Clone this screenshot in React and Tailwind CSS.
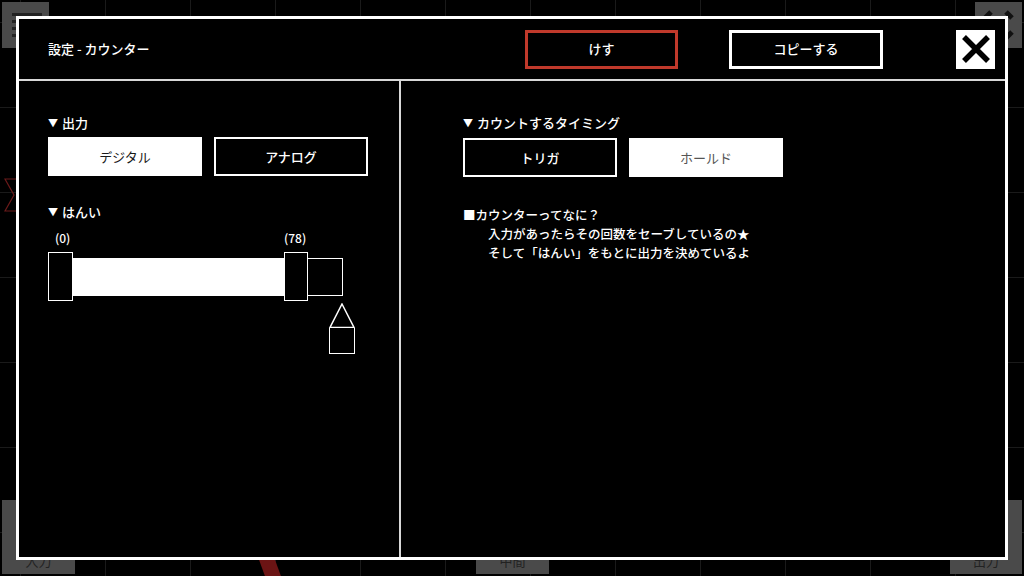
import React from 'react';

const font = { fontFamily: '"Noto Sans CJK JP", "Noto Sans", sans-serif' };

// gray tool buttons sitting on the canvas behind the dialog
const CanvasButton = ({ className, label }) => (
    <div className={`absolute bg-[#4a4a4a] flex items-end justify-center pb-1 text-[13px] text-[#222] ${className}`}>
        {label}
    </div>
);

const Toggle = ({ label, active, dim }) => (
    <button
        className={`w-[154px] h-[39px] flex items-center justify-center text-[13px] ${active
            ? `bg-white ${dim ? 'text-[#555]' : 'text-[#1a1a1a]'}`
            : 'bg-black text-white font-medium border-2 border-white'
            }`}
    >
        {label}
    </button>
);

const Section = ({ title }) => (
    <div className="text-[13px] leading-[16px] font-medium text-white flex items-center gap-1">
        <span className="text-[10px]">▼</span>
        <span>{title}</span>
    </div>
);

const RangeSlider = () => (
    <div className="mt-[10px]">
        <div className="flex text-[12px] leading-[16px] text-white font-medium">
            <span className="w-[236px] pl-[7px]">(0)</span>
            <span>(78)</span>
        </div>
        <div className="flex items-center mt-[6px]">
            <div className="w-[25px] h-[49px] border-[1.5px] border-white bg-black" />
            <div className="w-[211px] h-[38px] bg-white" />
            <div className="w-[24px] h-[49px] border-[1.5px] border-white bg-black" />
            <div className="w-[35px] h-[38px] border-[1.5px] border-white border-l-0 bg-black" />
        </div>
        <div className="ml-[281px] mt-[2px] flex flex-col">
            <svg width="26" height="25" viewBox="0 0 26 25">
                <polygon points="13,1 25,24.5 1,24.5" fill="black" stroke="white" strokeWidth="1.5" />
            </svg>
            <div className="w-[26px] h-[26px] border-[1.5px] border-white border-t-0" />
        </div>
    </div>
);

export default function App() {
    return (
        <div className="relative w-[1024px] h-[576px] overflow-hidden bg-black" style={font}>
            {/* canvas behind */}
            <div className="absolute inset-0 bg-[linear-gradient(to_right,#1a1a1a_1px,transparent_1px),linear-gradient(to_bottom,#1a1a1a_1px,transparent_1px)] bg-[size:85px_85px] bg-[position:20px_22px]" />
            <div className="absolute left-[2px] top-[2px] w-[47px] h-[46px] bg-[#4a4a4a] flex flex-col justify-center gap-[4px] pl-[10px]">
                <div className="w-[30px] h-[3px] bg-[#222]" />
                <div className="w-[30px] h-[3px] bg-[#222]" />
                <div className="w-[30px] h-[3px] bg-[#222]" />
                <div className="w-[30px] h-[3px] bg-[#222]" />
            </div>
            <div className="absolute left-[975px] top-[2px] w-[47px] h-[46px] bg-[#4a4a4a]">
                <svg width="47" height="46" viewBox="0 0 47 46">
                    <path d="M10 16 L16 10 M31 10 L37 16 M10 30 L16 36 M31 36 L37 30" stroke="#111" strokeWidth="5" />
                </svg>
            </div>
            <CanvasButton className="left-[2px] top-[500px] w-[73px] h-[74px]" label="入力" />
            <CanvasButton className="left-[476px] top-[500px] w-[73px] h-[74px]" label="中間" />
            <CanvasButton className="left-[950px] top-[500px] w-[72px] h-[74px]" label="出力" />
            <svg className="absolute left-[4px] top-[178px]" width="14" height="34" viewBox="0 0 14 34">
                <path d="M13 1 H1 L10 17 L1 33 H13" fill="none" stroke="#6b1a1a" strokeWidth="1.2" />
            </svg>
            <div className="absolute left-[262px] top-[556px] w-[16px] h-[24px] bg-[#6b1414] skew-x-[20deg]" />

            {/* dialog */}
            <div className="absolute left-[16px] top-[16px] w-[992px] h-[544px] border-[3px] border-white bg-black flex flex-col">
                <div className="h-[62px] shrink-0 border-b-2 border-[#d8d8d8] flex items-center pl-[29px] pr-[10px]">
                    <span className="flex-1 text-[13px] font-medium text-white">設定 - カウンター</span>
                    <button className="w-[153px] h-[39px] border-[3px] border-[#c0392b] text-white text-[13px] font-medium flex items-center justify-center">
                        けす
                    </button>
                    <button className="ml-[51px] w-[154px] h-[39px] border-[3px] border-white text-white text-[13px] font-medium flex items-center justify-center">
                        コピーする
                    </button>
                    <button className="ml-[73px] w-[39px] h-[39px] bg-white flex items-center justify-center">
                        <svg width="30" height="30" viewBox="0 0 30 30">
                            <path d="M3 3 L27 27 M27 3 L3 27" stroke="black" strokeWidth="5.5" />
                        </svg>
                    </button>
                </div>
                <div className="flex-1 flex">
                    <div className="w-[382px] shrink-0 border-r-2 border-[#d8d8d8] pl-[29px] pt-[34px]">
                        <Section title="出力" />
                        <div className="flex gap-[12px] mt-[6px]">
                            <Toggle label="デジタル" active />
                            <Toggle label="アナログ" />
                        </div>
                        <div className="mt-[28px]">
                            <Section title="はんい" />
                        </div>
                        <RangeSlider />
                    </div>
                    <div className="flex-1 pl-[62px] pt-[34px] text-white">
                        <Section title="カウントするタイミング" />
                        <div className="flex gap-[12px] mt-[7px]">
                            <Toggle label="トリガ" />
                            <Toggle label="ホールド" active dim />
                        </div>
                        <div className="mt-[28px] text-[12.5px] leading-[19px] font-medium">
                            <div>■カウンターってなに？</div>
                            <div className="pl-[25px]">入力があったらその回数をセーブしているの★</div>
                            <div className="pl-[25px]">そして「はんい」をもとに出力を決めているよ</div>
                        </div>
                    </div>
                </div>
            </div>
        </div>
    );
}
